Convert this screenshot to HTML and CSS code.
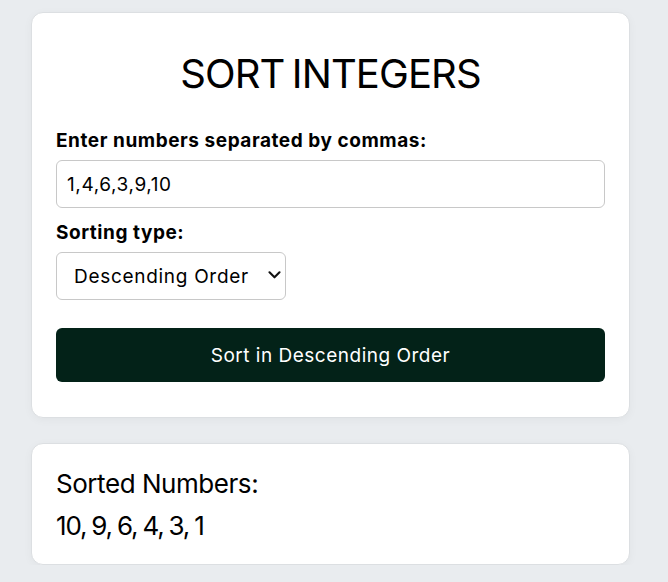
FILE: index.html
```html
<!DOCTYPE html>
<html lang="en">
<head>
<meta charset="utf-8">
<title>Sort Integers</title>
<link rel="stylesheet" href="styles.css">
</head>
<body>
<main class="page">
  <section class="card form-card">
    <h1 class="title">SORT INTEGERS</h1>
    <label class="label" for="nums">Enter numbers separated by commas:</label>
    <input class="field" id="nums" type="text" value="1,4,6,3,9,10">
    <label class="label label-sort" for="type">Sorting type:</label>
    <div class="select-wrap">
      <select class="select" id="type">
        <option>Descending Order</option>
      </select>
      <svg class="chev" width="13" height="8" viewBox="0 0 13 8"><path d="M1.5 1.3 L6.5 6.3 L11.5 1.3" fill="none" stroke="#111" stroke-width="2.1" stroke-linecap="round" stroke-linejoin="round"/></svg>
    </div>
    <button class="btn" type="button">Sort in Descending Order</button>
  </section>
  <section class="card result-card">
    <p class="result-title">Sorted Numbers:</p>
    <p class="result">10, 9, 6, 4, 3, 1</p>
  </section>
</main>
</body>
</html>
```

FILE: styles.css
```css
* { box-sizing: border-box; }
html, body { margin: 0; padding: 0; }
body {
  background: #e9ecef;
  font-family: "Inter", "Noto Sans", sans-serif;
  color: #000;
}
.page {
  width: 599px;
  margin-left: 31px;
  padding-top: 12px;
  display: flex;
  flex-direction: column;
  gap: 25px;
}
.card {
  background: #fff;
  border: 1px solid #dcdfe2;
  border-radius: 12px;
  box-shadow: 0 2px 10px rgba(0,0,0,0.04);
  padding: 0 24px 0 24px;
}
.form-card {
  display: flex;
  flex-direction: column;
  padding-top: 37px;
  padding-bottom: 35px;
}
.title {
  margin: 0 0 31px;
  font-size: 40px;
  font-weight: 400;
  text-align: center;
  line-height: 48px;
  letter-spacing: -0.9px;
  word-spacing: -3px;
}
.label {
  font-size: 19px;
  font-weight: 700;
  line-height: 24px;
  margin-bottom: 7px;
  letter-spacing: 0.55px;
}
.label-sort { margin-top: 13px; }
.field {
  height: 48px;
  border: 1px solid #c8c8c8;
  border-radius: 6px;
  padding: 0 10px;
  font: inherit;
  font-size: 19px;
  letter-spacing: 0.6px;
  color: #000;
}
.select-wrap {
  position: relative;
  width: 230px;
}
.select {
  appearance: none;
  -webkit-appearance: none;
  width: 230px;
  height: 48px;
  border: 1px solid #c8c8c8;
  border-radius: 6px;
  padding: 0 17px;
  background: #fff;
  font: inherit;
  font-size: 19px;
  letter-spacing: 0.7px;
  color: #000;
}
.chev {
  position: absolute;
  right: 5px;
  top: 19px;
}
.btn {
  margin-top: 28px;
  height: 54px;
  border: none;
  border-radius: 6px;
  background: #032218;
  color: #fff;
  font: inherit;
  font-size: 19px;
  letter-spacing: 0.5px;
}
.result-card {
  padding-top: 24px;
  padding-bottom: 22px;
}
.result-title, .result {
  margin: 0;
  font-size: 26px;
  line-height: 32px;
}
.result-title { letter-spacing: -0.45px; }
.result {
  margin-top: 10px;
  letter-spacing: -1.2px;
  word-spacing: -1px;
}
```
